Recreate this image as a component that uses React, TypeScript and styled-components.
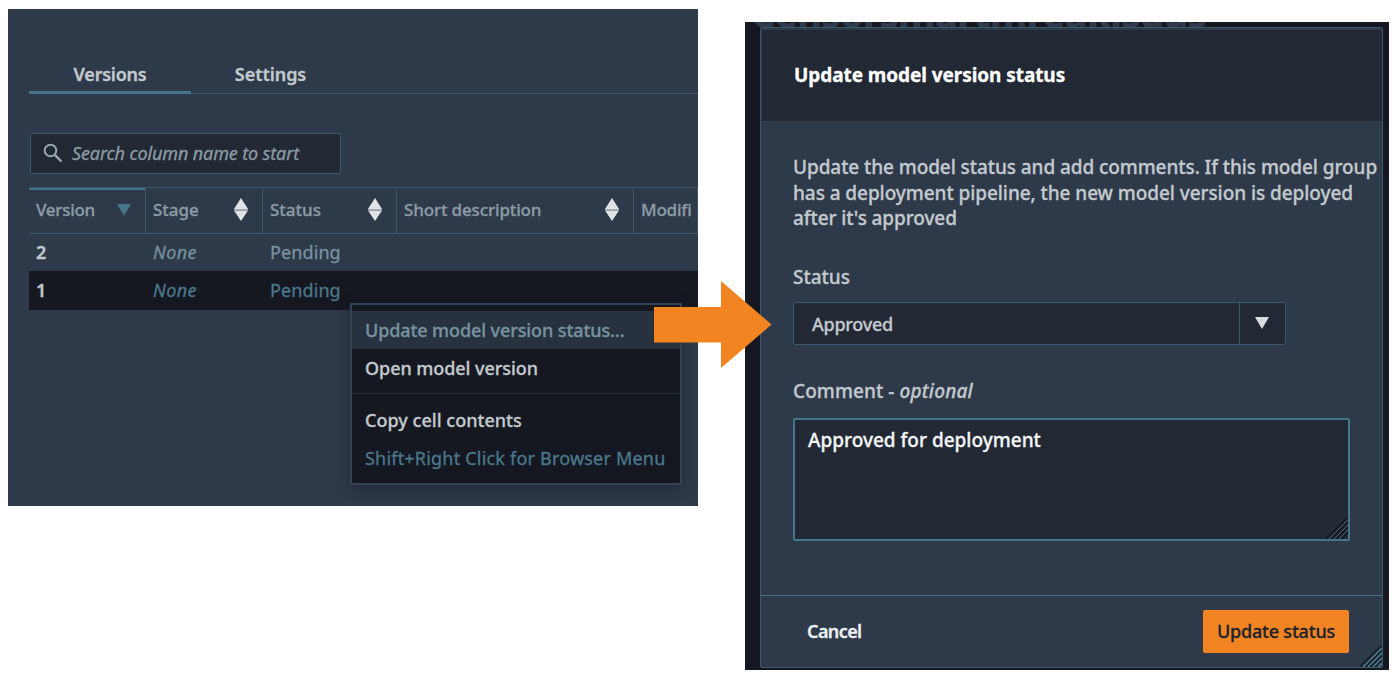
import React from 'react';
import styled, { createGlobalStyle, css } from 'styled-components';

const color = {
  panel: '#2e3949',
  field: '#222834',
  dark: '#151820',
  teal: '#44758b',
  line: '#3c596b',
  text: '#c3c9ce',
  muted: '#8b9ba5',
  orange: '#f28522',
};

const Global = createGlobalStyle`
  * { box-sizing: border-box; }
  body { margin: 0; background: #fff; font-family: "Noto Sans", "Open Sans", sans-serif; }
`;

const Page = styled.main`
  position: relative;
  display: flex;
  align-items: flex-start;
  width: 1398px;
  height: 678px;
  overflow: hidden;
`;

const Text = styled.span<{ $s?: number; $w?: number; $ls?: number; $c?: string; $i?: boolean }>`
  font-size: ${p => p.$s ?? 18}px;
  font-weight: ${p => p.$w ?? 500};
  letter-spacing: ${p => p.$ls ?? 0}px;
  color: ${p => p.$c ?? color.text};
  font-style: ${p => (p.$i ? 'italic' : 'normal')};
  line-height: 24px;
  white-space: nowrap;
  -webkit-text-stroke: 0.3px currentColor;
`;

/* Versions panel */
const VersionsPanel = styled.section`
  position: relative;
  width: 690px;
  height: 497px;
  margin: 9px 0 0 8px;
  padding: 42px 0 0 21px;
  background: ${color.panel};
`;

const Tabs = styled.nav`
  display: flex;
  height: 43px;
  background: linear-gradient(${color.line}, ${color.line}) 0 42px / 100% 1px no-repeat;
`;

const Tab = styled.div<{ $active?: boolean; $width: number }>`
  display: flex;
  justify-content: center;
  width: ${p => p.$width}px;
  padding-top: 11px;
  border-bottom: 3px solid ${p => (p.$active ? color.teal : 'transparent')};
`;

const Search = styled.div`
  display: flex;
  align-items: center;
  gap: 9px;
  width: 311px;
  height: 41px;
  margin: 39px 0 0 1px;
  padding: 0 0 2px 12px;
  background: ${color.field};
  border: 1px solid ${color.line};
  border-radius: 2px;
`;

const Grid = styled.div`
  display: grid;
  grid-template-columns: 117px 117px 134px 237px 64px;
`;

const HeaderRow = styled(Grid)`
  height: 47px;
  margin-top: 13px;
  border-top: 1px solid ${color.line};
  border-bottom: 1px solid ${color.line};
`;

const HeaderCell = styled.div<{ $sorted?: boolean }>`
  display: flex;
  align-items: center;
  justify-content: space-between;
  overflow: hidden;
  padding: 0 14px 2px 7px;
  border-right: 1px solid ${color.line};
  ${p => p.$sorted && css`box-shadow: inset 0 2px ${color.teal};`}
`;

const BodyRow = styled(Grid)<{ $selected?: boolean }>`
  align-items: center;
  height: ${p => (p.$selected ? 39 : 37)}px;
  padding-bottom: 2px;
  background: ${p => (p.$selected ? color.dark : 'transparent')};
`;

const Cell = styled.div`
  display: flex;
  padding-left: 7px;
`;

const Menu = styled.div`
  position: absolute;
  left: 342px;
  top: 294px;
  width: 332px;
  height: 182px;
  padding-top: 6px;
  background: ${color.dark};
  border: 2px solid #324153;
  box-shadow: 0 3px 12px rgba(20, 24, 32, 0.55);
`;

const MenuItem = styled.div<{ $active?: boolean }>`
  display: flex;
  align-items: center;
  height: 38px;
  padding-left: 13px;
  background: ${p => (p.$active ? '#28313e' : 'transparent')};
`;

const Separator = styled.hr`
  height: 1px;
  margin: 6px 0 7px;
  border: 0;
  background: #242b38;
`;

const Arrow = styled.svg`
  position: absolute;
  left: 653px;
  top: 281px;
  z-index: 3;
`;

/* Dialog */
const Backdrop = styled.section`
  position: relative;
  width: 644px;
  height: 648px;
  margin: 22px 0 0 47px;
  padding: 5px 6px 2px 15px;
  overflow: hidden;
  background: ${color.dark};
`;

const PageTitle = styled.div`
  position: absolute;
  left: 6px;
  top: -33px;
  font-size: 38px;
  font-weight: 800;
  letter-spacing: -0.8px;
  line-height: 48px;
  white-space: nowrap;
  color: #2f3b4c;
`;

const Dialog = styled.div`
  position: relative;
  display: flex;
  flex-direction: column;
  height: 641px;
  background: ${color.panel};
  border: 1px solid ${color.line};
  border-radius: 2px;
`;

const DialogHeader = styled.header`
  display: flex;
  align-items: center;
  height: 93px;
  padding: 0 0 1px 32px;
  background: ${color.field};
  border-top: 2px solid ${color.panel};
  border-left: 1px solid ${color.panel};
`;

const DialogBody = styled.div`
  display: flex;
  flex-direction: column;
  flex: 1;
  padding: 34px 0 0 32px;
`;

const Paragraph = styled.p`
  display: flex;
  flex-direction: column;
  gap: 1.7px;
  margin: 0;
`;

const FieldLabel = styled.div<{ $gap: number }>`
  display: flex;
  height: 24px;
  margin-top: ${p => p.$gap}px;
`;

const Select = styled.div`
  display: flex;
  justify-content: space-between;
  width: 493px;
  height: 43px;
  margin-top: 13px;
  background: ${color.field};
  border: 1px solid ${color.line};
  border-radius: 2px;
`;

const SelectValue = styled.div`
  display: flex;
  align-items: center;
  padding-left: 18px;
`;

const SelectButton = styled.div`
  display: flex;
  align-items: center;
  justify-content: center;
  width: 46px;
  padding: 0 1px 2px 0;
  border-left: 1px solid ${color.line};
`;

const Comment = styled.div`
  position: relative;
  width: 557px;
  height: 123px;
  margin-top: 15px;
  padding: 8px 13px;
  background: ${color.field};
  border: 2px solid ${color.teal};
  border-radius: 2px;
`;

const Resize = styled.svg`
  position: absolute;
  right: 0;
  bottom: 0;
`;

const Footer = styled.footer`
  display: flex;
  align-items: flex-start;
  justify-content: space-between;
  height: 72px;
  padding: 13px 33px 0 46px;
  border-top: 1px solid ${color.teal};
`;

const CancelButton = styled.div`
  display: flex;
  align-items: center;
  height: 44px;
`;

const PrimaryButton = styled(CancelButton)`
  justify-content: center;
  width: 146px;
  height: 43px;
  margin-top: 1px;
  padding-bottom: 1px;
  background: ${color.orange};
  border-radius: 2px;
`;

const SortBoth = () => (
  <svg width="14" height="23" viewBox="0 0 14 23">
    <path d="M7 0L14 11H0zM0 12.5H14L7 23z" fill="#dfe3e5" />
    <path d="M0 11H14V12.5H0z" fill="#aab3b8" />
  </svg>
);

const Caret = ({ fill }: { fill: string }) => (
  <svg width="14" height="12" viewBox="0 0 14 12">
    <path d="M0 0H14L7 12z" fill={fill} />
  </svg>
);

const SearchIcon = () => (
  <svg width="20" height="20" viewBox="0 0 20 20" fill="none" stroke="#9ba8b0" strokeWidth="2">
    <circle cx="7.5" cy="7.5" r="5.8" />
    <path d="M11.8 11.8L18.5 18.5" strokeWidth="2.4" />
  </svg>
);

export default function App() {
  return (
    <Page>
      <Global />
      <VersionsPanel>
        <Tabs>
          <Tab $active $width={162}><Text $w={600} $ls={-0.25}>Versions</Text></Tab>
          <Tab $width={159}><Text $w={600} $ls={-0.05}>Settings</Text></Tab>
        </Tabs>
        <Search>
          <SearchIcon />
          <Text $w={400} $ls={-0.13} $i $c={color.muted}>Search column name to start</Text>
        </Search>
        <HeaderRow>
          <HeaderCell $sorted>
            <Text $s={17} $ls={-0.3} $c={color.muted}>Version</Text>
            <Caret fill={color.teal} />
          </HeaderCell>
          <HeaderCell><Text $s={17} $c={color.muted}>Stage</Text><SortBoth /></HeaderCell>
          <HeaderCell><Text $s={17} $c={color.muted}>Status</Text><SortBoth /></HeaderCell>
          <HeaderCell><Text $s={17} $ls={-0.15} $c={color.muted}>Short description</Text><SortBoth /></HeaderCell>
          <HeaderCell><Text $s={17} $ls={-0.2} $c={color.muted}>Modifi</Text></HeaderCell>
        </HeaderRow>
        <BodyRow>
          <Cell><Text $w={600}>2</Text></Cell>
          <Cell><Text $w={400} $ls={0.4} $i $c="#71909f">None</Text></Cell>
          <Cell><Text $w={400} $ls={0.1} $c="#7793a0">Pending</Text></Cell>
        </BodyRow>
        <BodyRow $selected>
          <Cell><Text $w={600}>1</Text></Cell>
          <Cell><Text $w={400} $ls={0.4} $i $c="#4b788d">None</Text></Cell>
          <Cell><Text $w={400} $ls={0.1} $c="#4b788d">Pending</Text></Cell>
        </BodyRow>
        <Menu>
          <MenuItem $active><Text $ls={-0.1} $c="#7793a0">Update model version status...</Text></MenuItem>
          <MenuItem><Text $ls={-0.06}>Open model version</Text></MenuItem>
          <Separator />
          <MenuItem><Text $ls={0.03}>Copy cell contents</Text></MenuItem>
          <MenuItem><Text $w={400} $ls={0.2} $c="#4b788d">Shift+Right Click for Browser Menu</Text></MenuItem>
        </Menu>
      </VersionsPanel>

      <Arrow width="119" height="87" viewBox="0 0 119 87">
        <path d="M1 26H68V0L118.5 43.5L68 87V61.5H1z" fill={color.orange} />
      </Arrow>

      <Backdrop>
        <PageTitle>Censorsmartmreakisgus</PageTitle>
        <Dialog>
          <DialogHeader><Text $s={19} $w={700} $ls={-0.07} $c="#fff">Update model version status</Text></DialogHeader>
          <DialogBody>
            <Paragraph>
              <Text $s={19} $ls={-0.08}>Update the model status and add comments. If this model group</Text>
              <Text $s={19} $ls={-0.07}>has a deployment pipeline, the new model version is deployed</Text>
              <Text $s={19} $ls={-0.1}>after it's approved</Text>
            </Paragraph>
            <FieldLabel $gap={35}><Text $s={19}>Status</Text></FieldLabel>
            <Select>
              <SelectValue><Text $ls={-0.25}>Approved</Text></SelectValue>
              <SelectButton><Caret fill="#d8dcdf" /></SelectButton>
            </Select>
            <FieldLabel $gap={34}>
              <Text $s={19} $ls={0.08}>Comment -&nbsp;</Text>
              <Text $s={19} $ls={0.2} $i>optional</Text>
            </FieldLabel>
            <Comment>
              <Text $s={19} $c="#f3f5f6">Approved for deployment</Text>
              <Resize width="22" height="22" viewBox="0 0 22 22" stroke="#4a6275">
                <path d="M0 22L22 0M5 22L22 5M10 22L22 10M15 22L22 15" stroke="#12151c" strokeWidth="1.5" />
                <path d="M3 22L22 3M8 22L22 8M13 22L22 13" strokeWidth="1" />
              </Resize>
            </Comment>
          </DialogBody>
          <Footer>
            <CancelButton><Text $w={600} $ls={-0.6} $c="#eceff1">Cancel</Text></CancelButton>
            <PrimaryButton><Text $ls={-0.2} $c="#1d222d">Update status</Text></PrimaryButton>
          </Footer>
          <Resize width="22" height="22" viewBox="0 0 22 22">
            <path d="M0 22L22 0M5 22L22 5M10 22L22 10M15 22L22 15" stroke="#1b212b" strokeWidth="2" />
            <path d="M3 22L22 3M8 22L22 8M13 22L22 13M18 22L22 18" stroke="#4d8298" strokeWidth="1.3" />
          </Resize>
        </Dialog>
      </Backdrop>
    </Page>
  );
}
